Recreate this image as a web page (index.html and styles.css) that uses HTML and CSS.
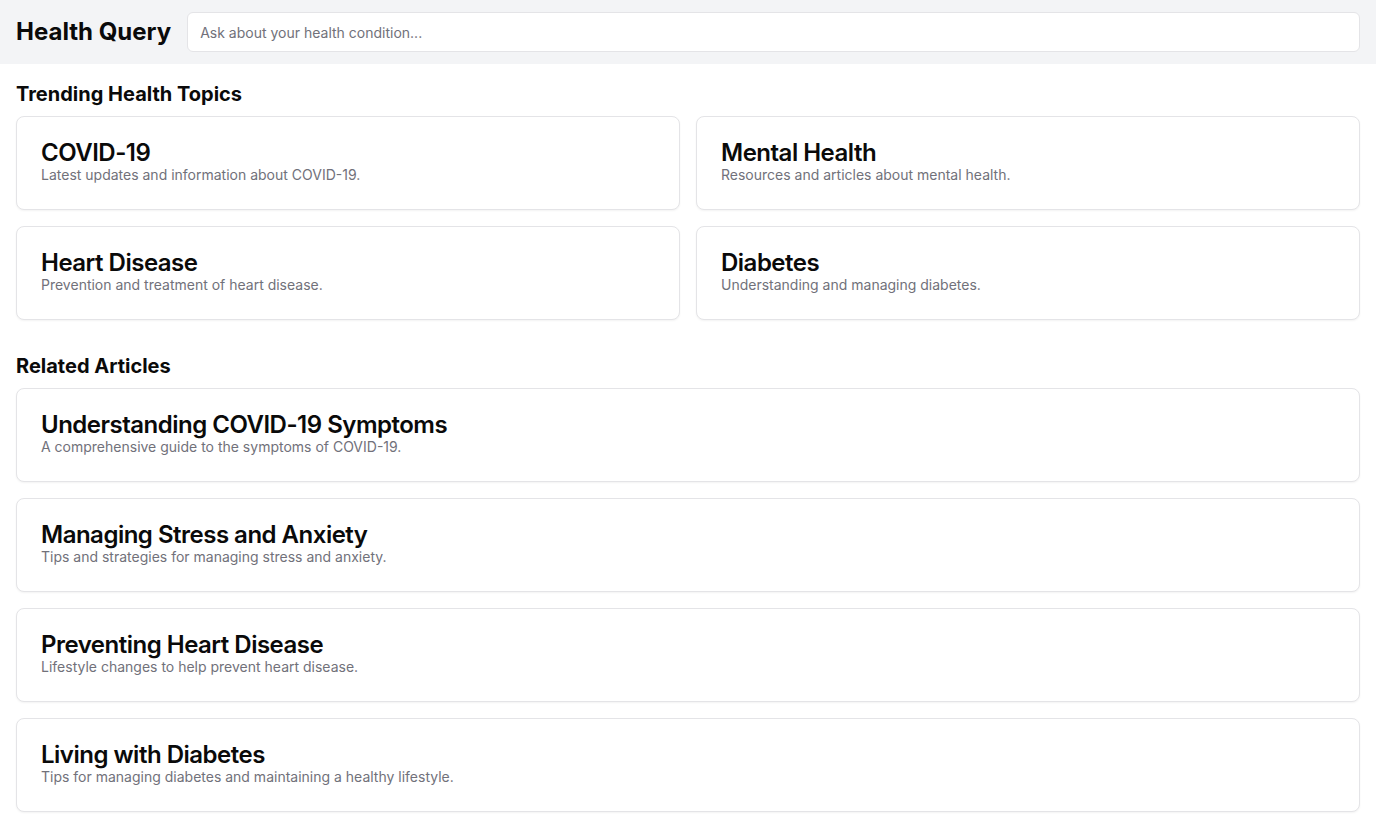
FILE: index.html
```html
<!DOCTYPE html>
<html lang="en">
<head>
<meta charset="utf-8">
<title>Health Query</title>
<link rel="stylesheet" href="styles.css">
</head>
<body>
<header class="topbar">
  <h1 class="brand">Health Query</h1>
  <input class="search" type="text" placeholder="Ask about your health condition...">
</header>
<main class="main">
  <section class="section">
    <h2 class="section-title">Trending Health Topics</h2>
    <div class="topic-grid">
      <div class="card"><h3 class="card-title">COVID-19</h3><p class="card-desc">Latest updates and information about COVID-19.</p></div>
      <div class="card"><h3 class="card-title">Mental Health</h3><p class="card-desc">Resources and articles about mental health.</p></div>
      <div class="card"><h3 class="card-title">Heart Disease</h3><p class="card-desc">Prevention and treatment of heart disease.</p></div>
      <div class="card"><h3 class="card-title">Diabetes</h3><p class="card-desc">Understanding and managing diabetes.</p></div>
    </div>
  </section>
  <section class="section">
    <h2 class="section-title">Related Articles</h2>
    <div class="article-list">
      <div class="card"><h3 class="card-title">Understanding COVID-19 Symptoms</h3><p class="card-desc">A comprehensive guide to the symptoms of COVID-19.</p></div>
      <div class="card"><h3 class="card-title">Managing Stress and Anxiety</h3><p class="card-desc">Tips and strategies for managing stress and anxiety.</p></div>
      <div class="card"><h3 class="card-title">Preventing Heart Disease</h3><p class="card-desc">Lifestyle changes to help prevent heart disease.</p></div>
      <div class="card"><h3 class="card-title">Living with Diabetes</h3><p class="card-desc">Tips for managing diabetes and maintaining a healthy lifestyle.</p></div>
    </div>
  </section>
</main>
</body>
</html>
```

FILE: styles.css
```css
* { box-sizing: border-box; }
html, body { margin: 0; padding: 0; }
body {
  font-family: Inter, "Noto Sans", "Liberation Sans", sans-serif;
  color: #0a0a0a;
  background: #ffffff;
}
.topbar {
  display: flex;
  align-items: center;
  gap: 16px;
  height: 64px;
  padding: 12px 16px;
  background: #f3f4f6;
}
.brand {
  margin: 0;
  font-size: 24px;
  line-height: 32px;
  font-weight: 700;
  white-space: nowrap;
}
.search {
  flex: 1;
  height: 40px;
  padding: 0 12px;
  border: 1px solid #e4e4e7;
  border-radius: 6px;
  background: #ffffff;
  font-family: inherit;
  font-size: 14px;
  color: #0a0a0a;
  outline: none;
}
.search::placeholder { color: #71717a; }
.main {
  padding: 16px;
  display: flex;
  flex-direction: column;
  gap: 32px;
}
.section { display: flex; flex-direction: column; gap: 8px; }
.section-title {
  margin: 0;
  font-size: 20px;
  line-height: 28px;
  font-weight: 700;
}
.topic-grid {
  display: grid;
  grid-template-columns: 1fr 1fr;
  gap: 16px;
}
.article-list {
  display: flex;
  flex-direction: column;
  gap: 16px;
}
.card {
  border: 1px solid #e4e4e7;
  border-radius: 8px;
  background: #ffffff;
  box-shadow: 0 1px 2px rgba(0,0,0,0.05);
  padding: 24px;
}
.card-title {
  margin: 0;
  font-size: 24px;
  line-height: 24px;
  font-weight: 600;
  letter-spacing: -0.5px;
}
.card-desc {
  margin: 0;
  font-size: 14px;
  line-height: 20px;
  color: #71717a;
}
```
